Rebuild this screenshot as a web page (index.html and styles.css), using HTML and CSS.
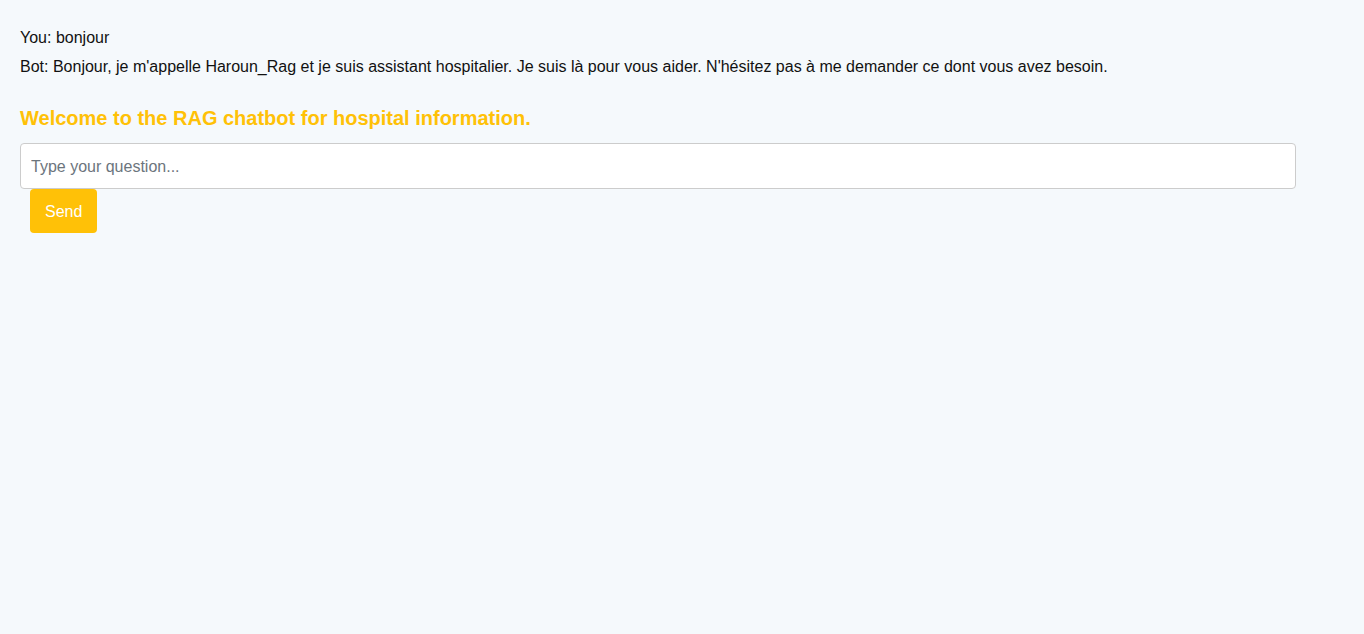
FILE: index.html
```html
<!DOCTYPE html>
<html lang="en">
<head>
<meta charset="utf-8">
<title>RAG chatbot</title>
<link rel="stylesheet" href="styles.css">
</head>
<body>
<div class="page">
  <div class="chat">
    <p class="msg">You: bonjour</p>
    <p class="msg">Bot: Bonjour, je m'appelle Haroun_Rag et je suis assistant hospitalier. Je suis là pour vous aider. N'hésitez pas à me demander ce dont vous avez besoin.</p>
  </div>
  <h2 class="title">Welcome to the RAG chatbot for hospital information.</h2>
  <form class="ask">
    <input class="question" type="text" placeholder="Type your question...">
    <button class="send" type="button">Send</button>
  </form>
</div>
</body>
</html>
```
FILE: styles.css
```css
html, body {
  margin: 0;
  padding: 0;
  background: #f5f9fc;
}
body {
  font-family: "Liberation Sans", Arial, sans-serif;
  font-size: 16px;
  color: #111;
}
.page {
  padding: 29px 20px 20px;
}
.chat {
  display: flex;
  flex-direction: column;
  gap: 11px;
}
.msg {
  margin: 0;
  line-height: 18px;
}
.title {
  margin: 31px 0 13px;
  font-size: 20px;
  font-weight: bold;
  color: #ffc107;
  line-height: 23px;
}
.ask {
  display: flex;
  flex-direction: column;
  align-items: flex-start;
  margin: 0;
}
.question {
  box-sizing: border-box;
  width: 1276px;
  height: 46px;
  padding: 12px 10px 10px;
  border: 1px solid #ccc;
  border-radius: 4px;
  background: #fff;
  font-family: "Liberation Sans", Arial, sans-serif;
  font-size: 16px;
  color: #333;
  outline: none;
}
.question::placeholder {
  color: #6c757d;
}
.send {
  margin-left: 10px;
  height: 44px;
  padding: 1px 15px 0;
  border: none;
  border-radius: 4px;
  background: #ffc107;
  color: #fff;
  font-family: "Liberation Sans", Arial, sans-serif;
  font-size: 16px;
  cursor: pointer;
}
```
